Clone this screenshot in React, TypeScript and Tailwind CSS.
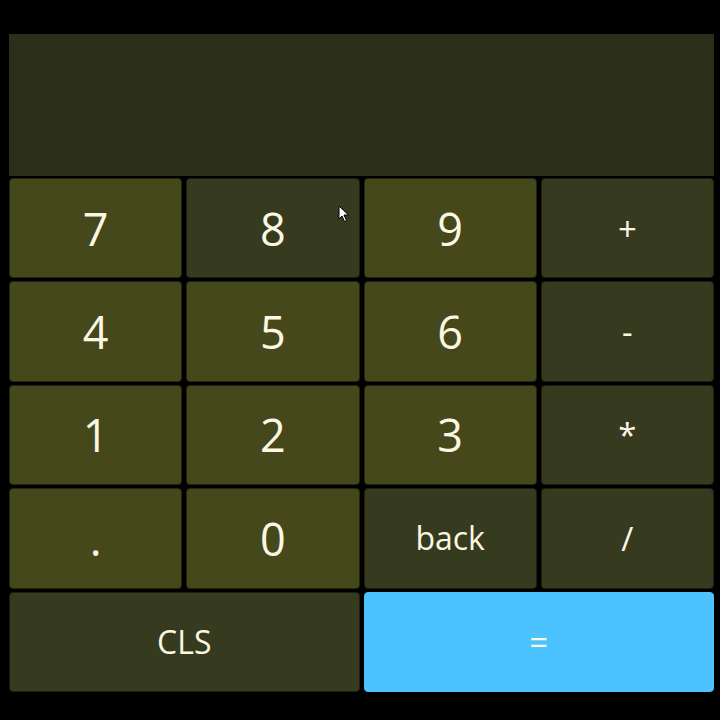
import React from 'react';

type Key = {
  label: string;
  kind: 'digit' | 'op' | 'equals';
  span?: boolean;
  hover?: boolean;
};

const keys: Key[] = [
  { label: '7', kind: 'digit' },
  { label: '8', kind: 'digit', hover: true },
  { label: '9', kind: 'digit' },
  { label: '+', kind: 'op' },
  { label: '4', kind: 'digit' },
  { label: '5', kind: 'digit' },
  { label: '6', kind: 'digit' },
  { label: '-', kind: 'op' },
  { label: '1', kind: 'digit' },
  { label: '2', kind: 'digit' },
  { label: '3', kind: 'digit' },
  { label: '*', kind: 'op' },
  { label: '.', kind: 'digit' },
  { label: '0', kind: 'digit' },
  { label: 'back', kind: 'op' },
  { label: '/', kind: 'op' },
  { label: 'CLS', kind: 'op', span: true },
  { label: '=', kind: 'equals', span: true },
];

// text size depends on what the key shows
const sizeFor = (k: Key) => {
  if (/^[0-9.]$/.test(k.label)) return 'text-[45px]';
  if (k.label === 'back' || k.label === 'CLS') return 'text-[32px]';
  return 'text-[33px]';
};

const CalcKey: React.FC<{ k: Key }> = ({ k }) => {
  let bg = 'bg-[#45481a] border-[#24260f]';
  if (k.kind === 'op' || k.hover) bg = 'bg-[#363a1e] border-[#1e200f]';
  if (k.kind === 'equals') bg = 'bg-[#4cc2ff] border-[#4cc2ff]';

  return (
    <button
      type="button"
      className={`relative flex items-center justify-center rounded-[4px] border text-[#fbf7e2] ${bg} ${
        k.span ? 'col-span-2' : ''
      } ${sizeFor(k)}`}
    >
      <span className="leading-none">{k.label}</span>
      {k.hover && (
        // mouse pointer caught in the screenshot
        <svg
          className="absolute left-[151px] top-[26px]"
          width="12"
          height="18"
          viewBox="0 0 12 18"
        >
          <path
            d="M1 1 L1 14 L4 11 L6.5 16.5 L8.5 15.5 L6 10 L10.5 10 Z"
            fill="#ffffff"
            stroke="#000000"
            strokeWidth="1"
          />
        </svg>
      )}
    </button>
  );
};

export default function App() {
  return (
    <div
      className="w-[720px] h-[720px] bg-black pt-[34px] pl-[9px] pr-[6px]"
      style={{ fontFamily: '"Open Sans", "Noto Sans", sans-serif' }}
    >
      <div className="flex flex-col gap-[2px]">
        {/* Display */}
        <div className="h-[142px] bg-[#2b2e18]" />

        {/* Keypad */}
        <div className="grid grid-cols-4 grid-rows-5 gap-x-[4px] gap-y-[3px] h-[514px]">
          {keys.map((k) => (
            <CalcKey key={k.label} k={k} />
          ))}
        </div>
      </div>
    </div>
  );
}
